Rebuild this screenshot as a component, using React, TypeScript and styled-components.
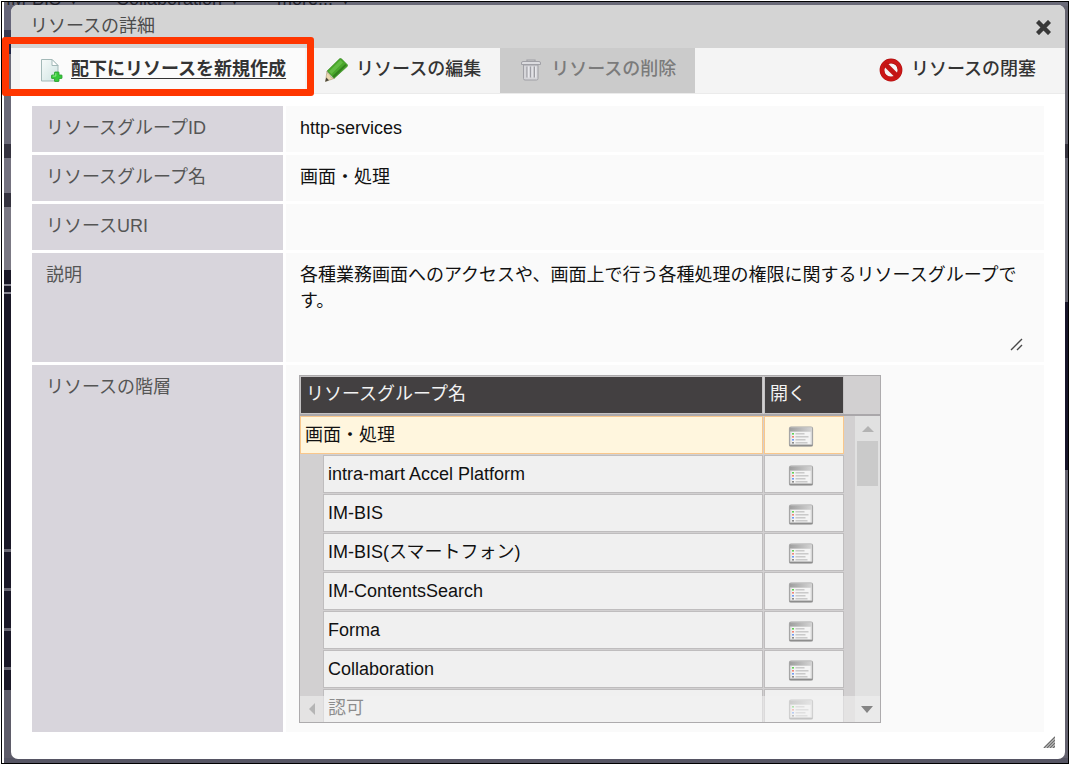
import React from "react";
import styled, { createGlobalStyle, css } from "styled-components";

const GlobalStyle = createGlobalStyle`
  *, *::before, *::after { box-sizing: border-box; }
  body {
    margin: 0;
    background: #fff;
    color: #111;
    font-family: "Liberation Sans", "Noto Sans CJK JP", sans-serif;
    font-size: 18px;
    line-height: 26px;
  }
  button, textarea { font: inherit; color: inherit; }
`;

const Frame = styled.div`
  position: relative;
  margin: 1px 0 0 1px;
  padding-left: 2px;
  border: 1px solid #000;
  min-height: calc(100vh - 1px);
  display: flex;
`;

const Desktop = styled.div`
  position: relative;
  flex: 1;
  min-width: 0;
  overflow: hidden;
  padding: 3px 3px 4px 7px;
  background:
    linear-gradient(#565564, #565564) bottom / 100% 5px no-repeat,
    linear-gradient(#6a6a78, #6a6a78) top / 100% 4px no-repeat,
    linear-gradient(#64636f 0 142px, #35333f 142px 156px, #64636f 156px 300px, #17152a 300px 468px, #64626f 468px) right / 50% 100% no-repeat,
    linear-gradient(
      #66667a 0 28px, #3c3c52 28px 42px, #1d2346 42px 52px,
      #6b6a78 52px 142px, #35333f 142px 156px, #757380 156px 191px,
      #35333f 191px 205px, #7b7984 205px 268px, #1b1928 268px 282px,
      #8a8894 282px 284px, #1b1928 284px 290px, #8a8894 290px 292px,
      #1b1928 292px 547px, #6b6975 547px 550px, #1b1928 550px 586px,
      #6b6975 586px 589px, #1b1928 589px 626px, #6b6975 626px 629px,
      #1b1928 629px 665px, #6b6975 665px 668px, #1b1928 668px 688px,
      #5f5d6a 688px
    );
`;

const PageNav = styled.nav`
  position: absolute;
  top: -16px;
  left: 2px;
  display: flex;
  gap: 38px;
  color: #25252f;
  white-space: nowrap;
`;

const NavItem = styled.span`
  display: flex;
  gap: 8px;
`;

const Dialog = styled.section`
  position: relative;
  border-radius: 7px;
  background: #fff;
  overflow: hidden;
  padding-bottom: 27px;
`;

const TitleBar = styled.header`
  display: flex;
  align-items: center;
  justify-content: space-between;
  height: 43px;
  padding: 0 14px 0 19px;
  background: #d4d4d4;
`;

const Title = styled.h1`
  margin: 0;
  padding-bottom: 2px;
  font-size: 18px;
  font-weight: 400;
  color: #4c4c4c;
`;

const CloseButton = styled.button`
  display: flex;
  padding: 2px 0 0;
  border: 0;
  background: none;
`;

const Toolbar = styled.div`
  display: flex;
  height: 46px;
  padding: 0 10px 0 9px;
  background: #f4f4f4;
  border-bottom: 1px solid #ebebeb;
`;

const Spacer = styled.div`
  flex: 1;
`;

const ToolButton = styled.button<{ $active?: boolean }>`
  display: flex;
  align-items: center;
  gap: 8px;
  padding: 0 19px 3px;
  border: 0;
  background: ${(p) => (p.$active ? "#fbfbfb" : "transparent")};
  color: #333;
  font-weight: 500;
  white-space: nowrap;
  ${(p) => p.$active && css`
    font-weight: 700;
    text-decoration: underline;
    text-underline-offset: 3px;
  `}
  svg { margin-top: 1px; }
  &:disabled {
    background: #cbcbcb;
    color: #7b7b7b;
  }
`;

const Highlight = styled.div`
  position: absolute;
  top: 35px;
  left: 0;
  width: 312px;
  height: 59px;
  border: 7px solid #ff3600;
  border-radius: 3px;
  pointer-events: none;
`;

const Details = styled.div`
  display: flex;
  flex-direction: column;
  gap: 3px;
  margin: 12px 21px 0;
`;

const Row = styled.div`
  display: grid;
  grid-template-columns: 251px minmax(0, 1fr);
  gap: 3px;
  min-height: 46px;
`;

const Label = styled.label`
  padding: 9px 14px;
  background: #d8d5dc;
  color: #555;
`;

const Value = styled.div<{ $tree?: boolean }>`
  position: relative;
  padding: 9px 20px 9px ${(p) => (p.$tree ? "13px" : "14px")};
  background: #fafafa;
`;

const Description = styled.textarea`
  display: block;
  width: 100%;
  height: 91px;
  padding: 0;
  border: 0;
  outline: 0;
  resize: none;
  background: transparent;
`;

const TextGrip = styled.svg`
  position: absolute;
  right: 21px;
  bottom: 11px;
`;

const TreeBox = styled.div`
  position: relative;
  display: flex;
  width: 582px;
  max-width: 100%;
  height: 348px;
  margin-top: 1px;
  border: 1px solid #adabad;
  background: #d2d0d1;
  overflow: hidden;
`;

const Tree = styled.table`
  display: block;
  flex: none;
`;

const TreeHead = styled.thead`
  display: block;
  border-bottom: 2px solid #aaa7aa;
`;

const TreeBody = styled.tbody`
  display: grid;
  gap: 1px;
`;

const TreeRow = styled.tr`
  display: grid;
  grid-template-columns: 463px 80px;
  gap: 1px;
  height: 38px;
`;

const HeadCell = styled.th`
  padding: 4px 5px;
  border: 1px solid #c4c2c3;
  background: #434041;
  color: #f2f2f2;
  font-weight: 400;
  text-align: left;
`;

const Cell = styled.td<{ $selected?: boolean; $child?: boolean }>`
  padding: 5px 4px;
  margin-left: ${(p) => (p.$child ? "23px" : "0")};
  border: 1px solid ${(p) => (p.$selected ? "#f9c78c" : "#bfbdbe")};
  background: ${(p) => (p.$selected ? "#fff6de" : "#f0f0f0")};
`;

const OpenCell = styled(Cell)`
  display: flex;
  justify-content: center;
  align-items: center;
  padding: 3px 6px 0 0;
`;

const OpenButton = styled.button`
  display: flex;
  padding: 0;
  border: 0;
  background: none;
`;

const ScrollSide = styled.div`
  display: flex;
  flex-direction: column;
  flex: 1;
`;

const HeadFill = styled.div`
  height: 40px;
  border-bottom: 2px solid #aaa7aa;
`;

const Track = styled.div`
  flex: 1;
  display: flex;
  flex-direction: column;
  align-items: center;
  margin-left: 11px;
  background: #e1e1e1;
`;

const Thumb = styled.div`
  width: 21px;
  height: 45px;
  margin-top: 9px;
  background: #cacaca;
`;

const Arrow = styled.svg`
  flex: none;
  margin-top: 10px;
`;

const BottomBar = styled.div`
  position: absolute;
  left: 0;
  right: 0;
  bottom: 0;
  display: flex;
  align-items: center;
  justify-content: space-between;
  height: 26px;
  padding: 0 7px 0 9px;
  background: rgba(242, 242, 242, 0.55);
`;

const ResizeGrip = styled.svg`
  position: absolute;
  right: 10px;
  bottom: 11px;
`;

const NewPageIcon = () => (
  <svg width="24" height="24" viewBox="0 0 24 24" aria-hidden="true">
    <defs>
      <linearGradient id="paper" x1="0" y1="0" x2="1" y2="1">
        <stop offset="0" stopColor="#f7fbfa" /><stop offset="1" stopColor="#cfe3e2" />
      </linearGradient>
    </defs>
    <path d="M2.500 1.500H13l6 6v15.500H2.500z" fill="url(#paper)" stroke="#a3b9b8" />
    <path d="M13 1.500v6h6z" fill="#fff" stroke="#a3b9b8" />
    <path d="M16 14h3.500q.5 0 .5.500V17h2.500q.5 0 .5.500V20q0 .5-.5.500H20v2.500q0 .5-.5.500H16q-.5 0-.5-.5v-2.500H13q-.5 0-.5-.5v-2.500q0-.5.500-.5h2.500v-2.500q0-.5.500-.5z" fill="#38c83b" stroke="#2a9d31" strokeWidth=".8" />
    <path d="M16.800 15.200v2.900h-3.100" fill="none" stroke="#8fee8c" />
  </svg>
);

const PencilIcon = () => (
  <svg width="24" height="24" viewBox="0 0 24 24" aria-hidden="true">
    <path d="M3 13 15.500.8q1-1 2 0l5.700 5.700q1 1 0 2L10 20.500z" fill="#4aa72c" stroke="#3b8a26" strokeWidth=".6" />
    <path d="m5 13.500 11.500-11.500 2.500 2.500-11.500 11.500z" fill="#62bb43" />
    <path d="m8.500 18 12.800-12 1.300 1.300L10 20z" fill="#34821f" />
    <path d="M3 13q0 3 2.700 3.200Q6 20 10 20.500L1.500 23.500z" fill="#ead8ae" stroke="#9d8d68" strokeWidth=".5" />
    <path d="m2.300 19.500 2.700 2.700L1.200 23.700z" fill="#49453b" />
  </svg>
);

const TrashIcon = () => (
  <svg width="24" height="24" viewBox="0 0 24 24" fill="none" aria-hidden="true">
    <path d="M4.500 7h14.500v13.500q0 1.500-1.500 1.500H6q-1.500 0-1.500-1.500z" fill="#d6d6da" stroke="#a0a0a6" />
    <path d="M8 8.500v11M11.700 8.500v11M15.400 8.500v11" stroke="#9d9da3" strokeWidth="1.300" />
    <path d="M9.300 8.500v11M13 8.500v11M16.700 8.500v11" stroke="#ececf0" strokeWidth="1.100" />
    <path d="M2.500 6.500V5q0-1.500 1.500-1.500h16q1.500 0 1.500 1.500v1.500z" fill="#dcdce0" stroke="#a0a0a6" />
    <path d="M8 3V2h8v1" stroke="#a0a0a6" strokeWidth="1.200" />
  </svg>
);

const ForbiddenIcon = () => (
  <svg width="24" height="24" viewBox="0 0 24 24" fill="none" aria-hidden="true">
    <circle cx="12" cy="12" r="9" fill="#f5f5f5" stroke="#b01111" strokeWidth="4.800" />
    <circle cx="12" cy="12" r="9" stroke="#cb1717" strokeWidth="3.600" />
    <path d="m5.500 5.500 13 13" stroke="#c31414" strokeWidth="4.800" />
  </svg>
);

const CloseIcon = () => (
  <svg width="15" height="15" viewBox="0 0 15 15" aria-hidden="true">
    <path d="m3 3 9 9M12 3l-9 9" stroke="#383838" strokeWidth="4.400" strokeLinecap="square" />
  </svg>
);

const listRows = [["#62cf56", 9], ["#ef8577", 13], ["#719bf2", 10], ["#8b8b8b", 12]] as const;

const WindowIcon = () => (
  <svg width="26" height="21" viewBox="0 0 26 21" fill="none" aria-hidden="true">
    <defs>
      <linearGradient id="titlebar" x1="0" y1="0" x2="1" y2="0">
        <stop offset="0" stopColor="#9f9f9f" /><stop offset="1" stopColor="#d4d4d4" />
      </linearGradient>
    </defs>
    <rect x="1.500" y="1" width="23" height="19" rx="1.500" fill="#dedede" stroke="#a6a6a6" strokeWidth="1.200" />
    <path d="M2 1.500h22v4H2z" fill="url(#titlebar)" />
    <rect x="3.500" y="6" width="19" height="12" fill="#f4f4f4" />
    {listRows.map(([color, length], i) => (
      <g key={color}>
        <rect x="4" y={7 + i * 3} width="2" height="1.600" fill={color} />
        <path d={`M7.500 ${7.8 + i * 3}h${length}`} stroke="#c2c2c2" strokeWidth="1.300" />
      </g>
    ))}
    <path d="M1.500 19.500h23" stroke="#8d8d8d" strokeWidth="1.600" />
  </svg>
);

const resources = [
  "画面・処理",
  "intra-mart Accel Platform",
  "IM-BIS",
  "IM-BIS(スマートフォン)",
  "IM-ContentsSearch",
  "Forma",
  "Collaboration",
  "認可",
];

const description =
  "各種業務画面へのアクセスや、画面上で行う各種処理の権限に関するリソースグループです。";

export default function App() {
  return (
    <>
      <GlobalStyle />
      <Frame>
        <Desktop>
          <PageNav aria-hidden="true">
            {["IM-BIS", "Collaboration", "more..."].map((name) => (
              <NavItem key={name}>{name} <span>▾</span></NavItem>
            ))}
          </PageNav>
          <Dialog role="dialog" aria-labelledby="dialog-title">
            <TitleBar>
              <Title id="dialog-title">リソースの詳細</Title>
              <CloseButton aria-label="閉じる"><CloseIcon /></CloseButton>
            </TitleBar>
            <Toolbar>
              <ToolButton $active><NewPageIcon />配下にリソースを新規作成</ToolButton>
              <ToolButton><PencilIcon />リソースの編集</ToolButton>
              <ToolButton disabled><TrashIcon />リソースの削除</ToolButton>
              <Spacer />
              <ToolButton><ForbiddenIcon />リソースの閉塞</ToolButton>
            </Toolbar>
            <Details>
              <Row><Label as="div">リソースグループID</Label><Value>http-services</Value></Row>
              <Row><Label as="div">リソースグループ名</Label><Value>画面・処理</Value></Row>
              <Row><Label as="div">リソースURI</Label><Value /></Row>
              <Row>
                <Label htmlFor="description">説明</Label>
                <Value>
                  <Description id="description" readOnly value={description} />
                  <TextGrip width="13" height="13" viewBox="0 0 13 13">
                    <path d="M1 12 12 1M7 12l5-5" stroke="#484848" strokeWidth="1.400" />
                  </TextGrip>
                </Value>
              </Row>
              <Row>
                <Label as="div">リソースの階層</Label>
                <Value $tree>
                  <TreeBox>
                    <Tree cellPadding={0} cellSpacing={0}>
                      <TreeHead>
                        <TreeRow>
                          <HeadCell>リソースグループ名</HeadCell>
                          <HeadCell>開く</HeadCell>
                        </TreeRow>
                      </TreeHead>
                      <TreeBody>
                        {resources.map((name, i) => (
                          <TreeRow key={name}>
                            <Cell $selected={i === 0} $child={i > 0}>{name}</Cell>
                            <OpenCell $selected={i === 0}>
                              <OpenButton aria-label={`${name}を開く`}><WindowIcon /></OpenButton>
                            </OpenCell>
                          </TreeRow>
                        ))}
                      </TreeBody>
                    </Tree>
                    <ScrollSide>
                      <HeadFill />
                      <Track>
                        <Arrow width="12" height="6" viewBox="0 0 12 6"><path d="M0 6 6 0l6 6z" fill="#b3b3b3" /></Arrow>
                        <Thumb />
                      </Track>
                    </ScrollSide>
                    <BottomBar>
                      <svg width="6" height="12" viewBox="0 0 6 12"><path d="M6 0v12L0 6z" fill="#b5b5b5" /></svg>
                      <svg width="12" height="7" viewBox="0 0 12 7"><path d="M0 0h12L6 7z" fill="#858585" /></svg>
                    </BottomBar>
                  </TreeBox>
                </Value>
              </Row>
            </Details>
            <ResizeGrip width="12" height="12" viewBox="0 0 12 12">
              <path d="M0 12 12 0v12z" fill="#c9c9c9" />
              <path d="M1 12 12 1M4 12l8-8M7 12l5-5M10 12l2-2" stroke="#6c6c6c" strokeWidth="1.100" />
            </ResizeGrip>
          </Dialog>
        </Desktop>
        <Highlight />
      </Frame>
    </>
  );
}
